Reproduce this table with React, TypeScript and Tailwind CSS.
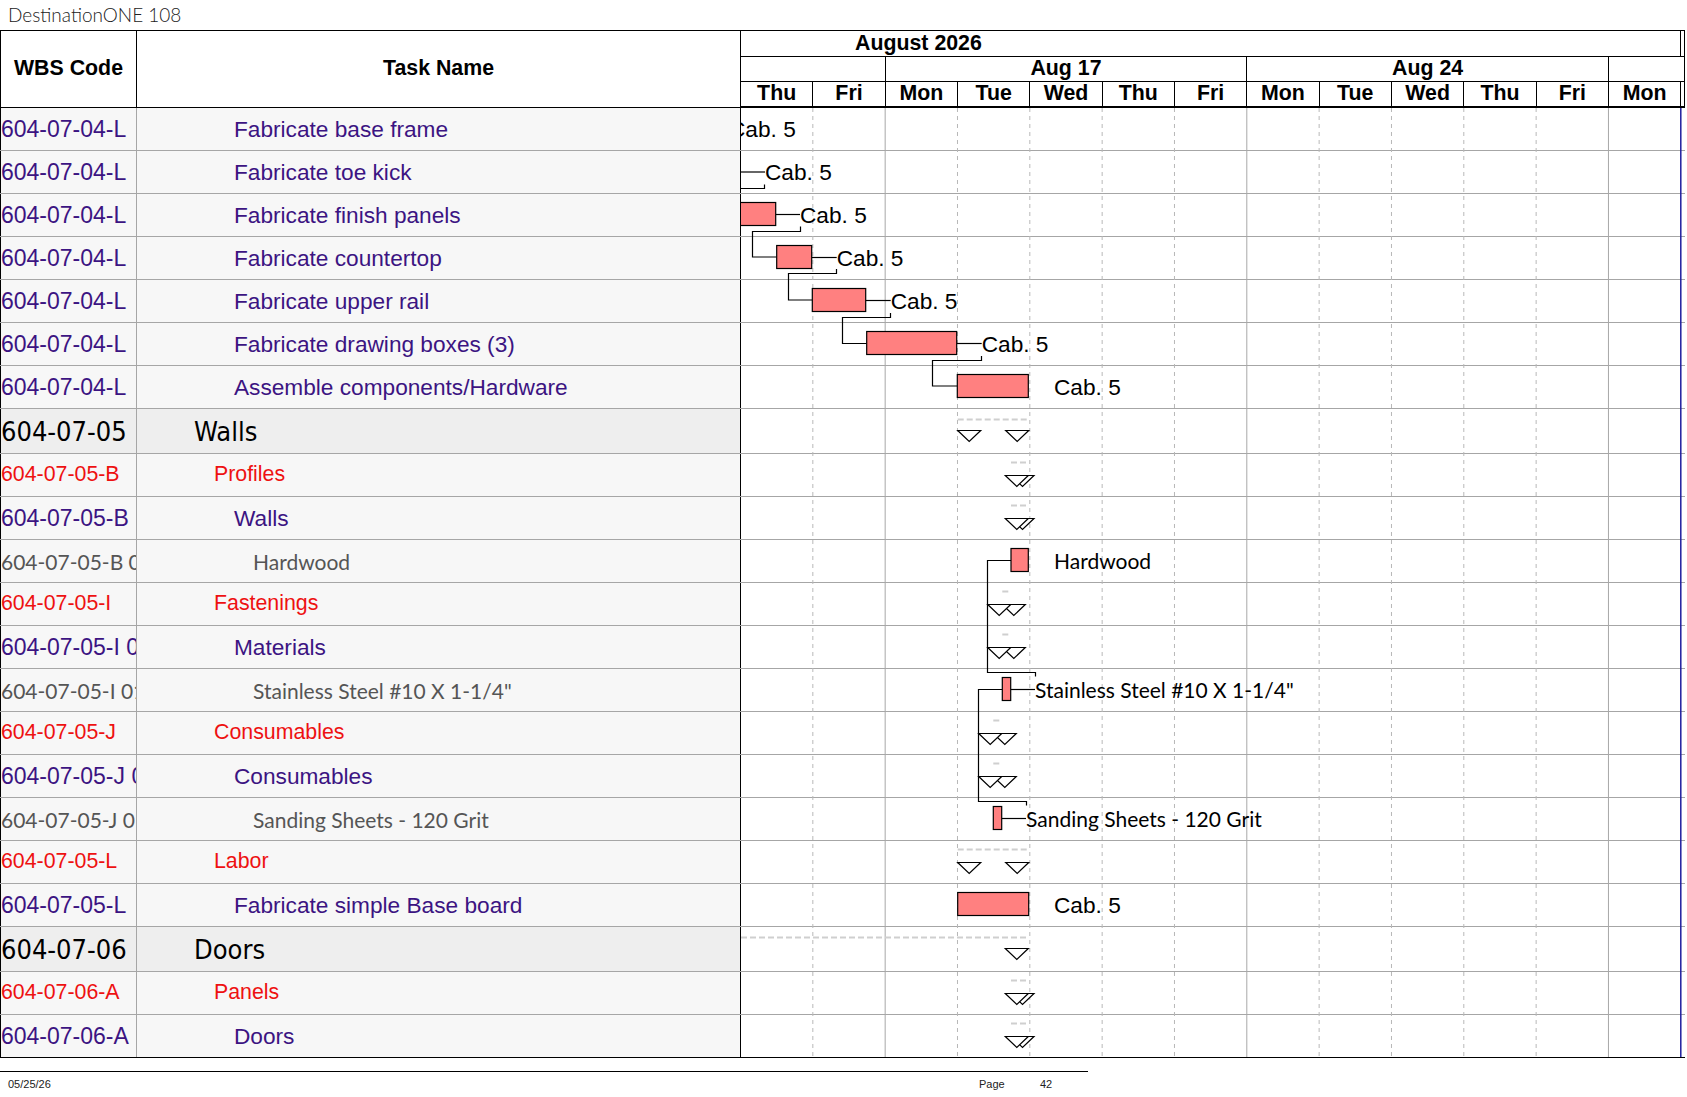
import React from "react";

type Kind = "task" | "group" | "cat" | "item";

interface Row {
    wbs: string;
    name: string;
    kind: Kind;
}

const rows: Row[] = [
    { wbs: "604-07-04-L", name: "Fabricate base frame", kind: "task" },
    { wbs: "604-07-04-L", name: "Fabricate toe kick", kind: "task" },
    { wbs: "604-07-04-L", name: "Fabricate finish panels", kind: "task" },
    { wbs: "604-07-04-L", name: "Fabricate countertop", kind: "task" },
    { wbs: "604-07-04-L", name: "Fabricate upper rail", kind: "task" },
    { wbs: "604-07-04-L", name: "Fabricate drawing boxes (3)", kind: "task" },
    { wbs: "604-07-04-L", name: "Assemble components/Hardware", kind: "task" },
    { wbs: "604-07-05", name: "Walls", kind: "group" },
    { wbs: "604-07-05-B", name: "Profiles", kind: "cat" },
    { wbs: "604-07-05-B", name: "Walls", kind: "task" },
    { wbs: "604-07-05-B 01", name: "Hardwood", kind: "item" },
    { wbs: "604-07-05-I", name: "Fastenings", kind: "cat" },
    { wbs: "604-07-05-I 01", name: "Materials", kind: "task" },
    { wbs: "604-07-05-I 01", name: "Stainless Steel #10 X 1-1/4\"", kind: "item" },
    { wbs: "604-07-05-J", name: "Consumables", kind: "cat" },
    { wbs: "604-07-05-J 01", name: "Consumables", kind: "task" },
    { wbs: "604-07-05-J 01", name: "Sanding Sheets - 120 Grit", kind: "item" },
    { wbs: "604-07-05-L", name: "Labor", kind: "cat" },
    { wbs: "604-07-05-L", name: "Fabricate simple Base board", kind: "task" },
    { wbs: "604-07-06", name: "Doors", kind: "group" },
    { wbs: "604-07-06-A", name: "Panels", kind: "cat" },
    { wbs: "604-07-06-A", name: "Doors", kind: "task" },
];

const wbsStyle: Record<Kind, string> = {
    task: "text-[#3c1482] text-[23px] font-['Liberation_Sans',Arial,sans-serif]",
    group: "text-black text-[27px] font-['DejaVu_Sans_Condensed','Liberation_Sans',sans-serif]",
    cat: "text-[#ee1111] text-[21.33px] font-['Liberation_Sans',Arial,sans-serif]",
    item: "text-[#555555] text-[21px] font-['Lato',sans-serif]",
};

const nameStyle: Record<Kind, string> = {
    task: "pl-[97px] text-[#3c1482] text-[22.67px] font-['Liberation_Sans',Arial,sans-serif]",
    group: "pl-[57px] text-black text-[27px] font-['DejaVu_Sans_Condensed','Liberation_Sans',sans-serif]",
    cat: "pl-[77px] text-[#ee1111] text-[21.33px] font-['Liberation_Sans',Arial,sans-serif]",
    item: "pl-[116px] text-[#555555] text-[21px] font-['Lato',sans-serif]",
};

const days = ["Thu", "Fri", "Mon", "Tue", "Wed", "Thu", "Fri", "Mon", "Tue", "Wed", "Thu", "Fri", "Mon"];

// row tops in page coordinates
const tops: number[] = [];
{
    let y = 108;
    rows.forEach((r) => {
        tops.push(y);
        y += r.kind === "group" ? 45 : 43;
    });
}

const DAY = 72.33;

const bars: [number, number, number][] = [
    [736, 775.7, 2],
    [776.7, 811.7, 3],
    [812.3, 865.7, 4],
    [866.7, 956.7, 5],
    [957.3, 1028.3, 6],
    [1011, 1028.3, 10],
    [1002.3, 1010.7, 13],
    [993.3, 1001.7, 16],
    [957.7, 1028.7, 18],
];

const labels: { x: number; row: number; text: string; lato?: boolean }[] = [
    { x: 729, row: 0, text: "Cab. 5" },
    { x: 765, row: 1, text: "Cab. 5" },
    { x: 800, row: 2, text: "Cab. 5" },
    { x: 836.7, row: 3, text: "Cab. 5" },
    { x: 890.7, row: 4, text: "Cab. 5" },
    { x: 981.7, row: 5, text: "Cab. 5" },
    { x: 1054, row: 6, text: "Cab. 5" },
    { x: 1054, row: 10, text: "Hardwood", lato: true },
    { x: 1035, row: 13, text: "Stainless Steel #10 X 1-1/4\"", lato: true },
    { x: 1026, row: 16, text: "Sanding Sheets - 120 Grit", lato: true },
    { x: 1054, row: 18, text: "Cab. 5" },
];

const links = [
    "M741 172 H765",
    "M775.7 214.5 H800",
    "M811.7 257.5 H836.7",
    "M865.7 300.5 H890.7",
    "M956.7 343.5 H981.7",
    "M1010.7 689.5 H1035",
    "M1001.7 818.5 H1026",
    "M741 188.5 H764.5 V184.5",
    "M800.5 226.5 V231.5 H752.5 V257 H776.7",
    "M836.5 269 V273.5 H788.5 V300 H812.3",
    "M890.5 313 V317.5 H842.5 V343.5 H866.7",
    "M981.5 356 V360.5 H932.5 V386 H957.3",
    "M1011 560.5 H987.5 V672.5 H1035.5 V676.5",
    "M1002.3 689.5 H978.5 V801.5 H1026.5 V805.5",
];

// row, start, end, show start marker
const summaries: [number, number, number, boolean][] = [
    [7, 957.7, 1028.7, true],
    [8, 1011, 1028.3, true],
    [9, 1011, 1028.3, true],
    [11, 1002.3, 1010.7, true],
    [12, 1002.3, 1010.7, true],
    [14, 993.3, 1001.7, true],
    [15, 993.3, 1001.7, true],
    [17, 957.7, 1028.7, true],
    [19, 741, 1028.3, false],
    [20, 1011, 1028.3, true],
    [21, 1011, 1028.3, true],
];

function tri(x: number, top: number) {
    return `${x},${top} ${x + 23},${top} ${x + 11.5},${top + 11}`;
}

function GanttDrawing() {
    return (
        <svg
            className="absolute left-[740px] top-0 pointer-events-none"
            width={945}
            height={950}
            viewBox="740 108 945 950"
        >
            <defs>
                <clipPath id="gclip">
                    <rect x={741} y={108} width={944} height={949} />
                </clipPath>
            </defs>
            <g clipPath="url(#gclip)">
                {Array.from({ length: 12 }, (_, k) => {
                    const i = k + 1;
                    const x = 740.5 + DAY * i;
                    const solid = i === 2 || i === 7 || i === 12;
                    return (
                        <line
                            key={i}
                            x1={x}
                            x2={x}
                            y1={108}
                            y2={1057}
                            stroke={solid ? "#a8a8a8" : "#b8b8b8"}
                            strokeWidth={1}
                            strokeDasharray={solid ? undefined : "4 4"}
                        />
                    );
                })}
                <line x1={1680.8} x2={1680.8} y1={108} y2={1057} stroke="#1e1e9e" strokeWidth={1.5} />

                {summaries.map(([r, s, e, showStart], i) => {
                    const top = tops[r];
                    const dashY = top + (rows[r].kind === "group" ? 10.5 : 8.5);
                    const ty = top + 21.5;
                    return (
                        <g key={i}>
                            <line x1={s} x2={e} y1={dashY} y2={dashY} stroke="#cfcfcf" strokeWidth={2} strokeDasharray="6 3" />
                            {showStart && <polygon points={tri(s, ty)} fill="white" stroke="black" strokeWidth={1.2} />}
                            <polygon points={tri(e - 23, ty)} fill="white" stroke="black" strokeWidth={1.2} />
                        </g>
                    );
                })}

                {links.map((d, i) => (
                    <path key={i} d={d} fill="none" stroke="black" strokeWidth={1.2} />
                ))}

                {bars.map(([x1, x2, r], i) => (
                    <rect
                        key={i}
                        x={x1}
                        y={tops[r] + 8.5}
                        width={x2 - x1}
                        height={23}
                        fill="#ff8080"
                        stroke="black"
                        strokeWidth={1.2}
                    />
                ))}

                {labels.map((l, i) => (
                    <text
                        key={i}
                        x={l.x}
                        y={tops[l.row] + (l.lato ? 29.3 : 28.7)}
                        fontFamily={l.lato ? "Lato, sans-serif" : "'Liberation Sans', Arial, sans-serif"}
                        fontSize={l.lato ? 21 : 22.67}
                        fill="black"
                    >
                        {l.text}
                    </text>
                ))}
            </g>
        </svg>
    );
}

export default function App() {
    return (
        <div className="w-[1687px] h-[1097px] bg-white overflow-hidden font-['Liberation_Sans',Arial,sans-serif]">
            <div className="h-[30px] flex items-center pl-[8px] text-[19px] font-light text-[#222] font-['Lato',sans-serif]">
                DestinationONE 108
            </div>

            <div className="w-[1685px] border-t border-black">
                {/* header */}
                <div className="flex h-[77px]">
                    <div className="w-[137px] border-l border-r border-b border-black flex items-center justify-center font-bold text-[21.33px] text-black">
                        WBS Code
                    </div>
                    <div className="w-[603px] border-b border-black flex items-center justify-center font-bold text-[21.33px] text-black">
                        Task Name
                    </div>
                    <div className="w-[945px] border-l border-r border-black flex flex-col font-bold text-[21.33px] text-black">
                        <div className="h-[26px] border-b border-black shrink-0">
                            <div className="w-[940.3px] h-full border-r border-black flex items-center pl-[114px] leading-none">
                                August 2026
                            </div>
                        </div>
                        <div className="h-[25px] border-b border-black flex shrink-0 leading-none">
                            <div className="w-[144.66px] border-r border-black" />
                            <div className="w-[361.65px] border-r border-black flex items-center justify-center">Aug 17</div>
                            <div className="w-[361.65px] border-r border-black flex items-center justify-center">Aug 24</div>
                            <div className="flex-1" />
                        </div>
                        <div className="h-[26px] border-b-2 border-black grid grid-cols-[repeat(13,72.33px)] shrink-0 leading-none">
                            {days.map((d, i) => (
                                <div key={i} className="border-r border-black flex items-center justify-center">
                                    {d}
                                </div>
                            ))}
                        </div>
                    </div>
                </div>

                {/* body */}
                <div className="relative">
                    {rows.map((r, i) => {
                        const last = i === rows.length - 1;
                        const group = r.kind === "group";
                        return (
                            <div
                                key={i}
                                className={`flex ${group ? "h-[45px]" : "h-[43px]"} border-b ${last ? "border-black" : "border-[#a6a6a6]"}`}
                            >
                                <div
                                    className={`w-[137px] border-l border-l-black border-r border-r-[#a6a6a6] ${group ? "bg-[#eeeeee]" : "bg-[#f7f7f7]"} overflow-hidden whitespace-nowrap flex items-center leading-none ${wbsStyle[r.kind]}`}
                                >
                                    {r.wbs}
                                </div>
                                <div
                                    className={`w-[603px] ${group ? "bg-[#eeeeee]" : "bg-[#f7f7f7]"} overflow-hidden whitespace-nowrap flex items-center leading-none ${nameStyle[r.kind]}`}
                                >
                                    {r.name}
                                </div>
                                <div className="w-[945px] border-l border-black bg-white" />
                            </div>
                        );
                    })}
                    <GanttDrawing />
                </div>
            </div>

            {/* footer */}
            <div className="mt-[13px] w-[1088px] h-px bg-black" />
            <div className="h-[24px] flex items-center text-[11px] text-[#222] font-['Liberation_Sans',Arial,sans-serif]">
                <span className="w-[979px] pl-[8px]">05/25/26</span>
                <span className="w-[61px]">Page</span>
                <span>42</span>
            </div>
        </div>
    );
}
